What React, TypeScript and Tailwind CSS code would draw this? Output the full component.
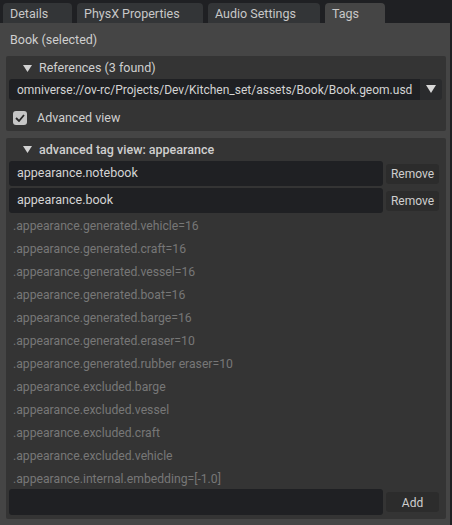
import React from 'react'

const font = { fontFamily: 'Roboto, "Noto Sans", sans-serif' }

const tabs = [
  { label: 'Details', w: 'w-[69px]' },
  { label: 'PhysX Properties', w: 'w-[126px]' },
  { label: 'Audio Settings', w: 'w-[112px]' },
  { label: 'Tags', w: 'w-[60px]', active: true },
]

const hiddenTags = [
  '.appearance.generated.vehicle=16',
  '.appearance.generated.craft=16',
  '.appearance.generated.vessel=16',
  '.appearance.generated.boat=16',
  '.appearance.generated.barge=16',
  '.appearance.generated.eraser=10',
  '.appearance.generated.rubber eraser=10',
  '.appearance.excluded.barge',
  '.appearance.excluded.vessel',
  '.appearance.excluded.craft',
  '.appearance.excluded.vehicle',
  '.appearance.internal.embedding=[-1.0]',
]

function Triangle() {
  return (
    <svg width="9" height="8" viewBox="0 0 9 8" className="shrink-0">
      <path d="M0 0 L9 0 L4.5 7 Z" fill="#d2d2d2" />
    </svg>
  )
}

function TagRow({ text, button }: { text: string; button: string }) {
  return (
    <div className="flex items-center h-[25px] pl-[3px] pr-[7px]">
      <div className="flex-1 h-full bg-[#1f2023] rounded-[3px] pl-[8px] flex items-center text-[#d4d4d4] text-[12.5px]">
        {text}
      </div>
      <button className="ml-[3px] w-[53px] h-[20px] bg-[#2c2c2c] rounded-[3px] text-[#cfcfcf] text-[12px] pt-[1px] flex items-center justify-center">
        {button}
      </button>
    </div>
  )
}

export default function App() {
  return (
    <div className="w-[452px] h-[525px] bg-[#1f2023] overflow-hidden text-[12.5px]" style={font}>
      {/* Tab bar */}
      <div className="flex gap-[5px] pl-[3px] pt-[3px] h-[23px]">
        {tabs.map((t) => (
          <div
            key={t.label}
            className={`${t.w} h-[20px] rounded-t-[4px] pl-[7px] pt-[2px] flex items-center text-[#c8c8c8] ${
              t.active ? 'bg-[#454545]' : 'bg-[#333537]'
            }`}
          >
            {t.label}
          </div>
        ))}
      </div>

      {/* Panel */}
      <div className="w-[450px] h-[502px] bg-[#454545] flex flex-col">
        <div className="h-[33px] pl-[10px] flex items-center text-[#cfcfcf] pt-[1px]">
          Book (selected)
        </div>

        {/* References frame */}
        <div className="ml-[6px] w-[440px] bg-[#343434] rounded-[2px] flex flex-col">
          <div className="h-[23px] flex items-center pl-[17px] pt-[2px] gap-[7px] text-[#cfcfcf]">
            <Triangle />
            <span>References (3 found)</span>
          </div>
          <div className="ml-[3px] w-[433px] h-[21px] flex rounded-[3px] overflow-hidden">
            <div className="flex-1 bg-[#1f2023] pl-[8px] flex items-center text-[12px] text-[#d4d4d4] whitespace-nowrap overflow-hidden">
              omniverse://ov-rc/Projects/Dev/Kitchen_set/assets/Book/Book.geom.usd
            </div>
            <div className="w-[22px] bg-[#2a2b2d] flex items-center justify-center">
              <svg width="10" height="9" viewBox="0 0 10 9">
                <path d="M0 0 L10 0 L5 8 Z" fill="#d8d8d8" />
              </svg>
            </div>
          </div>
          <div className="h-[31px] flex items-center pl-[7px] pt-[5px] gap-[10px] text-[#cfcfcf]">
            <div className="w-[14px] h-[14px] rounded-[3px] bg-[#c6c6c6] flex items-center justify-center">
              <svg width="10" height="8" viewBox="0 0 10 8">
                <path d="M1 4 L4 7 L9 1" fill="none" stroke="#2a2a2a" strokeWidth="1.8" />
              </svg>
            </div>
            <span>Advanced view</span>
          </div>
        </div>

        {/* Advanced tag view frame */}
        <div className="mt-[7px] ml-[6px] w-[440px] h-[381px] bg-[#343434] rounded-[2px] flex flex-col">
          <div className="h-[23px] flex items-center pl-[17px] pt-[1px] gap-[7px] text-[#cfcfcf] font-medium">
            <Triangle />
            <span>advanced tag view: appearance</span>
          </div>
          <div className="flex flex-col gap-[2px]">
            <TagRow text="appearance.notebook" button="Remove" />
            <TagRow text="appearance.book" button="Remove" />
          </div>
          <div className="flex flex-col">
            {hiddenTags.map((t) => (
              <div key={t} className="h-[23px] pl-[7px] pt-[4px] flex items-center text-[12.2px] text-[#777777]">
                {t}
              </div>
            ))}
          </div>
          <div className="flex items-center h-[26px] pl-[3px] pr-[7px]">
            <div className="flex-1 h-full bg-[#1f2023] rounded-[3px]" />
            <button className="ml-[3px] w-[53px] h-[20px] bg-[#2c2c2c] rounded-[3px] text-[#cfcfcf] text-[12px] pt-[1px] flex items-center justify-center">
              Add
            </button>
          </div>
        </div>
      </div>
    </div>
  )
}
